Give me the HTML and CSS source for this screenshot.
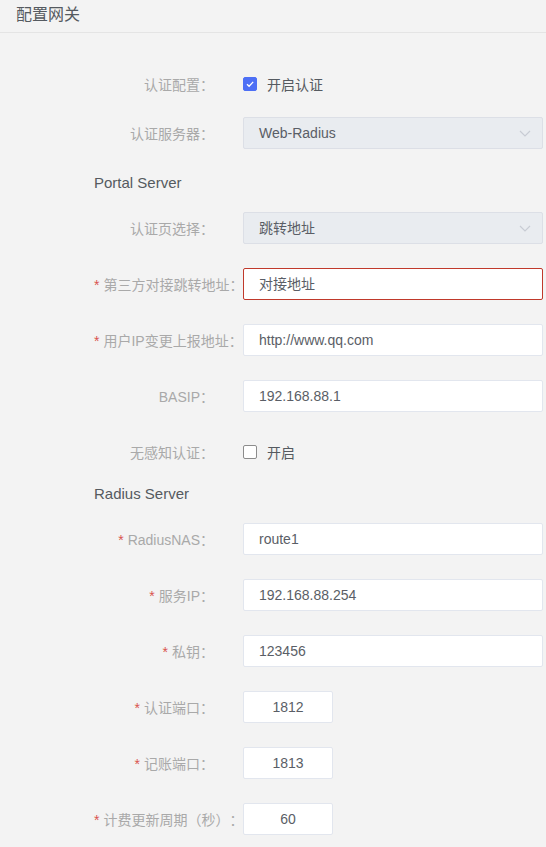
FILE: index.html
```html
<!DOCTYPE html>
<html lang="zh-CN">
<head>
<meta charset="utf-8">
<title>配置网关</title>
<link rel="stylesheet" href="styles.css">
</head>
<body>
<div class="header">配置网关</div>
<div class="form">
  <div class="item item--check">
    <div class="label">认证配置<span class="colon">：</span></div>
    <div class="control">
      <span class="checkbox checkbox--on"><svg viewBox="0 0 14 14" width="14" height="14"><path d="M4 7.2 L6.1 9.3 L10.2 4.9" fill="none" stroke="#fff" stroke-width="1.3"/></svg></span><span class="check-text">开启认证</span>
    </div>
  </div>
  <div class="item">
    <div class="label">认证服务器<span class="colon">：</span></div>
    <div class="control"><div class="input select">Web-Radius<svg class="arrow" viewBox="0 0 12 7" width="12" height="7"><path d="M1 1 L6 6 L11 1" fill="none" stroke="#c8ccd4" stroke-width="1.2"/></svg></div></div>
  </div>
  <div class="title">Portal Server</div>
  <div class="item">
    <div class="label">认证页选择<span class="colon">：</span></div>
    <div class="control"><div class="input select">跳转地址<svg class="arrow" viewBox="0 0 12 7" width="12" height="7"><path d="M1 1 L6 6 L11 1" fill="none" stroke="#c8ccd4" stroke-width="1.2"/></svg></div></div>
  </div>
  <div class="item">
    <div class="label"><span class="req">*</span>第三方对接跳转地址<span class="colon">：</span></div>
    <div class="control"><div class="input input--error">对接地址</div></div>
  </div>
  <div class="item">
    <div class="label"><span class="req">*</span>用户IP变更上报地址<span class="colon">：</span></div>
    <div class="control"><div class="input">http://www.qq.com</div></div>
  </div>
  <div class="item">
    <div class="label">BASIP<span class="colon">：</span></div>
    <div class="control"><div class="input">192.168.88.1</div></div>
  </div>
  <div class="item item--tight">
    <div class="label">无感知认证<span class="colon">：</span></div>
    <div class="control"><span class="checkbox"></span><span class="check-text">开启</span></div>
  </div>
  <div class="title">Radius Server</div>
  <div class="item">
    <div class="label"><span class="req">*</span>RadiusNAS<span class="colon">：</span></div>
    <div class="control"><div class="input">route1</div></div>
  </div>
  <div class="item">
    <div class="label"><span class="req">*</span>服务IP<span class="colon">：</span></div>
    <div class="control"><div class="input">192.168.88.254</div></div>
  </div>
  <div class="item">
    <div class="label"><span class="req">*</span>私钥<span class="colon">：</span></div>
    <div class="control"><div class="input">123456</div></div>
  </div>
  <div class="item">
    <div class="label"><span class="req">*</span>认证端口<span class="colon">：</span></div>
    <div class="control"><div class="input input--short">1812</div></div>
  </div>
  <div class="item">
    <div class="label"><span class="req">*</span>记账端口<span class="colon">：</span></div>
    <div class="control"><div class="input input--short">1813</div></div>
  </div>
  <div class="item">
    <div class="label"><span class="req">*</span>计费更新周期<span class="colon">（</span>秒<span class="colon">）：</span></div>
    <div class="control"><div class="input input--short">60</div></div>
  </div>
</div>
</body>
</html>
```
FILE: styles.css
```css
html, body {
  margin: 0;
  padding: 0;
  background: #f3f3f3;
  font-family: "Liberation Sans", "Noto Sans CJK SC", sans-serif;
  font-size: 14px;
  color: #606266;
  text-spacing-trim: space-all;
}

.header {
  height: 32px;
  line-height: 30px;
  padding-left: 16px;
  font-size: 16px;
  color: #555a60;
  border-bottom: 1px solid #e4e4e4;
}

.form {
  padding: 35px 0 0 94px;
}

.item {
  display: flex;
  align-items: center;
  height: 32px;
  margin-bottom: 24px;
}

.item--check {
  margin-bottom: 17px;
}

.item--tight {
  margin-bottom: 16px;
}

.label {
  flex: none;
  width: 149px;
  box-sizing: border-box;
  padding-right: 29px;
  text-align: right;
  white-space: nowrap;
  color: #a9a9a9;
  font-size: 14px;
}

.colon {
  font-family: "Noto Sans CJK TC", "Noto Sans CJK SC", sans-serif;
  text-spacing-trim: space-all;
}

.req {
  color: #d9534f;
  margin-right: 4px;
}

.control {
  width: 300px;
  display: flex;
  align-items: center;
}

.input {
  position: relative;
  width: 100%;
  height: 32px;
  box-sizing: border-box;
  border: 1px solid #e2e6ee;
  border-radius: 2px;
  background: #fff;
  padding: 0 15px;
  line-height: 30px;
  font-size: 14px;
  color: #5a5e66;
  white-space: nowrap;
}

.input--short {
  width: 90px;
  padding: 0;
  text-align: center;
}

.input--error {
  border-color: #c0392b;
}

.select {
  background: #e9ecf0;
  border-color: #dcdfe6;
}

.arrow {
  position: absolute;
  right: 11px;
  top: 12px;
}

.checkbox {
  display: inline-block;
  width: 14px;
  height: 14px;
  box-sizing: border-box;
  border: 1px solid #8c8c8c;
  border-radius: 2px;
  background: #fff;
}

.checkbox svg {
  display: block;
  margin: -1px;
}

.checkbox--on {
  background: #4d6ff5;
  border-color: #4d6ff5;
}

.check-text {
  padding-left: 10px;
  color: #555a60;
  font-size: 14px;
}

.title {
  height: 20px;
  line-height: 20px;
  font-size: 15px;
  color: #555a60;
  margin-bottom: 19px;
}
```
